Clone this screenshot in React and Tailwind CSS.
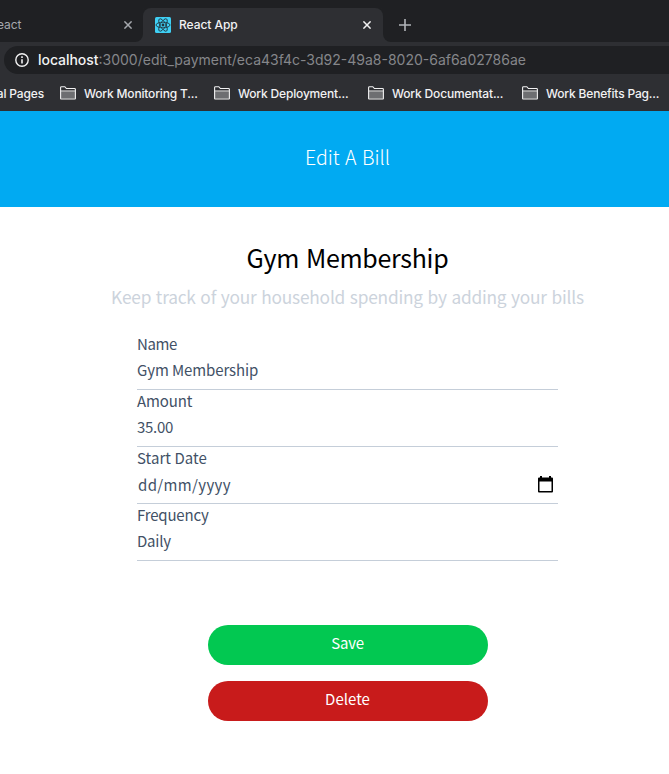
import React from "react";

const UI = "font-['Inter','Roboto',sans-serif]";

function Folder() {
  return (
    <svg className="h-[14px] w-4 shrink-0" viewBox="0 0 16 14" fill="none">
      <path d="M1 5.5h14v7H1z" fill="#6d6e71" />
      <path d="M.6 12.5V1.6q0-.9.9-.9h3.3l1.6 1.8h8.1q.9 0 .9.9v9.1q0 .5-.5.5H1.1q-.5 0-.5-.5ZM1 5h14" stroke="#f1f1f2" strokeWidth="1.1" />
    </svg>
  );
}

function Cross({ className }) {
  return (
    <svg className={className} viewBox="0 0 8 8" fill="none" stroke="currentColor" strokeWidth="1.5">
      <path d="M.4.4l7.2 7.2M7.6.4.4 7.6" />
    </svg>
  );
}

function ReactLogo() {
  return (
    <svg className="h-4 w-4 shrink-0" viewBox="0 0 16 16" fill="none">
      <rect width="16" height="16" rx="1.5" fill="#3fd0f5" />
      <g stroke="#20333c" strokeWidth=".85">
        <ellipse cx="8" cy="8" rx="7" ry="2.8" />
        <ellipse cx="8" cy="8" rx="7" ry="2.8" transform="rotate(60 8 8)" />
        <ellipse cx="8" cy="8" rx="7" ry="2.8" transform="rotate(120 8 8)" />
      </g>
      <circle cx="8" cy="8" r="1.4" fill="#20333c" />
    </svg>
  );
}

const bookmarks = [
  "Work Monitoring T...",
  "Work Deployment...",
  "Work Documentat...",
  "Work Benefits Pag...",
];

const fields = [
  { label: "Name", value: "Gym Membership", labelSpacing: "tracking-[-0.4px]", spacing: "tracking-[-0.1px]" },
  { label: "Amount", value: "35.00", labelSpacing: "tracking-[-0.1px]", spacing: "tracking-[-0.3px]" },
  { label: "Start Date", value: "dd/mm/yyyy", labelSpacing: "tracking-[0.05px]", spacing: "tracking-[0.35px]", date: true },
  { label: "Frequency", value: "Daily", labelSpacing: "tracking-[-0.2px]", spacing: "tracking-[-0.2px]" },
];

function Browser() {
  return (
    <header className={`${UI} h-[111px] overflow-hidden bg-[#2e2f33] whitespace-nowrap`}>
      <div className="flex h-[42px] bg-[#2e2f33]">
        <div className="flex w-[143px] items-center justify-between rounded-br-lg bg-[#1f2023] pt-2 pr-[11px] text-[12px] text-[#a5a8ad]">
          <span className="-ml-[3px] tracking-[-0.1px]">eact</span>
          <Cross className="h-2 w-2" />
        </div>
        <div className="flex w-[240px] flex-col">
          <div className="h-2 bg-[#1f2023]" />
          <div className="flex-1 bg-linear-to-b from-[#1f2023] from-50% to-[#2e2f33] to-50%">
            <div className="flex h-[34px] items-center rounded-t-lg bg-[#2e2f33] pr-3 pl-3 text-[12px] font-medium text-[#f2f2f3]">
              <ReactLogo />
              <span className="ml-2 tracking-[-0.05px]">React App</span>
              <Cross className="ml-auto h-2 w-2" />
            </div>
          </div>
        </div>
        <div className="flex flex-1 items-center rounded-bl-lg bg-[#1f2023] pt-2 pl-4">
          <svg className="h-3 w-3" viewBox="0 0 12 12" stroke="#b1b4b9" strokeWidth="1.6">
            <path d="M6 0v12M0 6h12" />
          </svg>
        </div>
      </div>
      <div className="mt-1 ml-1 flex h-7 items-center rounded-l-full bg-[#1f2023] pl-[11px] text-[14px] text-[#85868a]">
        <svg className="mr-[9px] h-[14px] w-[14px]" viewBox="0 0 14 14" fill="none" stroke="#f1f1f2" strokeWidth="1.4">
          <circle cx="7" cy="7" r="6.2" />
          <path d="M7 6.2v4.2M7 3.3v1.6" strokeWidth="1.6" />
        </svg>
        <span className="pb-px">
          <span className="font-medium tracking-[-0.04px] text-[#f2f2f3]">localhost</span>:3000/edit_payment/eca43f4c-3d92-49a8-8020-6af6a02786ae
        </span>
      </div>
      <div className="flex h-[37px] items-center text-[12px] font-medium text-[#f2f2f3]">
        <div className="flex w-[60px] shrink-0 justify-end pt-[2px] pr-4">
          <span className="tracking-[-0.15px]">al Pages</span>
        </div>
        {bookmarks.map((label) => (
          <div key={label} className="flex w-[154px] shrink-0 items-center gap-2">
            <Folder />
            <span className="pt-[2px] tracking-[-0.17px]">{label}</span>
          </div>
        ))}
      </div>
    </header>
  );
}

function Field({ label, value, labelSpacing, spacing, date }) {
  return (
    <div className="h-[57px] border-b border-[#c5ced9] text-[15px] leading-[24px] text-[#425166]">
      <div className={`-mt-px ${labelSpacing}`}>{label}</div>
      <div className={`flex items-center justify-between ${date ? "mt-[3px]" : "mt-[2px]"}`}>
        <span className={`${spacing} ${date ? "pl-px" : ""}`}>{value}</span>
        {date && (
          <svg className="mr-[5px] mb-px h-[17px] w-[15px]" viewBox="0 0 15 17">
            <path d="M2 0h2v1.5h7V0h2v1.5h1q1 0 1 1v13q0 1-1 1H1q-1 0-1-1v-13q0-1 1-1h1ZM1.5 5.5V15h12V5.5Z" fill="#000" fillRule="evenodd" />
          </svg>
        )}
      </div>
    </div>
  );
}

export default function App() {
  return (
    <div className="h-[774px] w-[669px] overflow-hidden bg-white">
      <Browser />
      <div className="w-[695px] font-['Noto_Sans_CJK_SC',sans-serif]">
        <div className="flex h-24 justify-center bg-[#01aaf2] pt-[30px] text-[19.5px] leading-[32px] font-light tracking-[0.05px] [word-spacing:1px] text-white">
          <h1>Edit A Bill</h1>
        </div>
        <main className="flex flex-col items-center">
          <h2 className="mt-[30px] text-[25px] leading-[40px] tracking-[-0.3px] text-black [word-spacing:1.5px]">Gym Membership</h2>
          <p className="mt-[6px] text-[17.3px] leading-[28px] tracking-[-0.2px] text-[#ccd3dc] [word-spacing:1px]">Keep track of your household spending by adding your bills</p>
          <form className="mt-[22px] flex w-[421px] flex-col">
            {fields.map((f) => <Field key={f.label} {...f} />)}
          </form>
          <button className="mt-16 h-10 w-[280px] rounded-full bg-[#02c851] pb-[3px] text-[15px] tracking-[-0.2px] text-white">Save</button>
          <button className="mt-4 h-10 w-[280px] rounded-full bg-[#c81b1b] pb-[3px] text-[15px] text-white">Delete</button>
        </main>
      </div>
    </div>
  );
}
